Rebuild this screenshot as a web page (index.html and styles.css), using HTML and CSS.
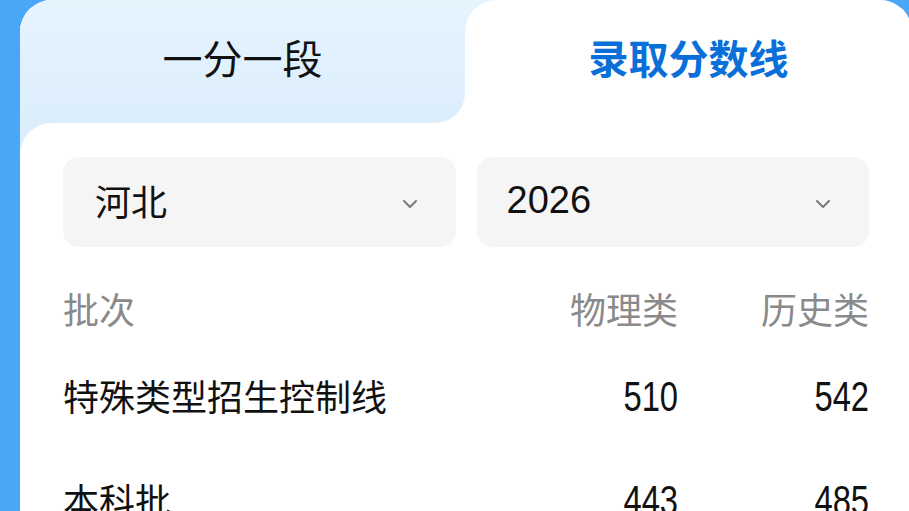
FILE: index.html
```html
<!DOCTYPE html>
<html lang="zh-CN">
<head>
    <meta charset="UTF-8">
    <title>录取分数线</title>
    <link rel="stylesheet" href="styles.css">
</head>
<body>
    <div class="card">
        <div class="tabs">
            <div class="tab-wrap">
                <div class="tab">一分一段</div>
            </div>
            <div class="tab active">录取分数线</div>
        </div>

        <div class="content">
            <div class="filters">
                <div class="select">
                    <span>河北</span>
                    <svg class="chevron" viewBox="0 0 16 10" width="16" height="10">
                        <path d="M2 2 L8 8 L14 2" fill="none" stroke="#7a7a7a" stroke-width="2" stroke-linecap="round" stroke-linejoin="round"/>
                    </svg>
                </div>
                <div class="select">
                    <span class="year">2026</span>
                    <svg class="chevron" viewBox="0 0 16 10" width="16" height="10">
                        <path d="M2 2 L8 8 L14 2" fill="none" stroke="#7a7a7a" stroke-width="2" stroke-linecap="round" stroke-linejoin="round"/>
                    </svg>
                </div>
            </div>

            <div class="table">
                <div class="row head">
                    <div>批次</div>
                    <div class="r">物理类</div>
                    <div class="r">历史类</div>
                </div>
                <div class="row">
                    <div>特殊类型招生控制线</div>
                    <div class="r"><span class="num">510</span></div>
                    <div class="r"><span class="num">542</span></div>
                </div>
                <div class="row">
                    <div>本科批</div>
                    <div class="r"><span class="num">443</span></div>
                    <div class="r"><span class="num">485</span></div>
                </div>
            </div>
        </div>
    </div>
</body>
</html>
```

FILE: styles.css
```css
html, body {
    margin: 0;
    padding: 0;
    height: 100%;
    overflow: hidden;
}

body {
    background: #4aa7f8;
    font-family: "Noto Sans CJK SC", "Noto Sans", sans-serif;
    color: #111;
}

.card {
    margin-left: 20px;
    width: 892px;
    height: 560px;
    background: linear-gradient(#e6f4fe, #dcedfc 120px);
    border-radius: 32px 32px 0 0;
    overflow: hidden;
}

.tabs {
    display: grid;
    grid-template-columns: 445px 1fr;
    height: 123px;
}

.tab-wrap {
    background: #fff;
}

.tab {
    height: 100%;
    display: flex;
    align-items: center;
    justify-content: center;
    font-size: 40px;
    padding-bottom: 10px;
    box-sizing: border-box;
    background: linear-gradient(#e6f4fe, #dcedfc 120px);
    border-bottom-right-radius: 30px;
}

.tab.active {
    background: #fff;
    color: #0a6fd8;
    font-weight: bold;
    border-radius: 32px 32px 0 0;
}

.content {
    background: #fff;
    border-top-left-radius: 32px;
    padding: 34px 43px 0 43px;
    height: 100%;
}

.filters {
    display: grid;
    grid-template-columns: 1fr 1fr;
    gap: 21px;
}

.select {
    height: 90px;
    background: #f5f5f5;
    border-radius: 16px;
    display: flex;
    align-items: center;
    justify-content: space-between;
    padding: 0 38px 0 32px;
    font-size: 36px;
}

.select span {
    margin-top: -4px;
}

.select .year {
    font-family: "Liberation Sans", Arial, sans-serif;
    font-size: 38px;
    margin-left: -2px;
}

.chevron {
    margin-top: 4px;
}

.table {
    margin-top: 28px;
}

.row {
    display: grid;
    grid-template-columns: 1fr 190px 191px;
    align-items: center;
    height: 104px;
    font-size: 36px;
    padding-bottom: 4px;
    box-sizing: border-box;
}

.row.head {
    height: 70px;
    color: #8a8a8a;
}

.r {
    text-align: right;
}

.num {
    display: inline-block;
    font-family: "Liberation Sans", Arial, sans-serif;
    font-size: 42px;
    transform: scaleX(0.78);
    transform-origin: right center;
}
```
